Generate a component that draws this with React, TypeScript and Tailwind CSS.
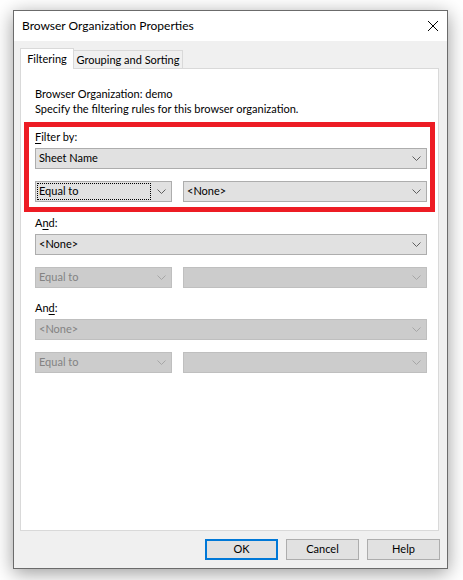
import React from "react";

function Chevron({ disabled }: { disabled?: boolean }) {
    return (
        <svg width="9" height="5" viewBox="0 0 9 5" className={disabled ? "text-[#a6a6a6]" : "text-[#5f5f5f]"}>
            <polyline points="0.5,0.5 4.5,4.5 8.5,0.5" fill="none" stroke="currentColor" strokeWidth="1" />
        </svg>
    );
}

function Select({ value, disabled, focused }: { value?: string; disabled?: boolean; focused?: boolean }) {
    return (
        <div
            className={
                disabled
                    ? "flex h-[21px] items-center border border-[#bfbfbf] bg-[#cccccc] text-[#838383]"
                    : "flex h-[21px] items-center border border-[#adadad] bg-[#e1e1e1] text-black"
            }
        >
            <div className="flex h-full flex-1 items-center p-[1px]">
                <span
                    className={
                        focused
                            ? "flex h-full w-full items-center border border-dotted border-black pl-[1px]"
                            : "flex h-full w-full items-center border border-transparent pl-[1px]"
                    }
                >
                    {value}
                </span>
            </div>
            <div className="flex w-[19px] justify-center">
                <Chevron disabled={disabled} />
            </div>
        </div>
    );
}

function FilterGroup({
    label,
    field,
    disabled,
    rowDisabled,
    focused,
    className,
}: {
    label: React.ReactNode;
    field: string;
    disabled?: boolean;
    rowDisabled?: boolean;
    focused?: boolean;
    className?: string;
}) {
    return (
        <div className={className}>
            {/* Label */}
            <div className="h-[15px] leading-[15px]">{label}</div>

            {/* Field */}
            <div className="mt-[4px]">
                <Select value={field} disabled={disabled} />
            </div>

            {/* Operator + value */}
            <div className="mt-[12px] grid grid-cols-[137px_1fr] gap-[11px]">
                <Select value="Equal to" disabled={rowDisabled} focused={focused} />
                <Select value={rowDisabled ? "" : "<None>"} disabled={rowDisabled} />
            </div>
        </div>
    );
}

function Button({ children, primary }: { children: React.ReactNode; primary?: boolean }) {
    return (
        <button
            className={
                primary
                    ? "flex h-[21px] w-[73px] items-center justify-center border-2 border-[#0078d7] bg-[#e1e1e1] text-black"
                    : "flex h-[21px] w-[73px] items-center justify-center border border-[#adadad] bg-[#e1e1e1] text-black"
            }
        >
            {children}
        </button>
    );
}

export default function App() {
    return (
        <div className="h-[580px] w-[463px] bg-white pl-[13px] pt-[10px] font-['Segoe_UI','Lato',sans-serif] text-[11px] text-black">
            <div className="flex h-[559px] w-[435px] flex-col border border-[#6b6b6b] shadow-[0_4px_18px_rgba(0,0,0,0.4)]">
                {/* Title bar */}
                <div className="flex h-[30px] items-center justify-between bg-white pl-[8px] pr-[9px]">
                    <span className="text-[12px]">Browser Organization Properties</span>
                    <svg width="10" height="10" viewBox="0 0 10 10">
                        <path d="M0 0 L10 10 M10 0 L0 10" stroke="#000" strokeWidth="1" />
                    </svg>
                </div>

                {/* Body */}
                <div className="flex flex-1 flex-col bg-[#f0f0f0]">
                    {/* Tabs */}
                    <div className="flex items-end pl-[6px] pt-[7px]">
                        <div className="relative z-10 -mb-px flex h-[21px] w-[54px] items-center justify-center whitespace-nowrap border border-b-0 border-[#d9d9d9] bg-white">
                            Filtering
                        </div>
                        <div className="flex h-[18px] w-[109px] items-center justify-center whitespace-nowrap border-r border-t border-[#d9d9d9] bg-[#f0f0f0] pt-[1px]">
                            Grouping and Sorting
                        </div>
                    </div>

                    {/* Panel */}
                    <div className="relative ml-[6px] mr-[8px] h-[463px] border border-[#d9d9d9] bg-white pl-[14px] pr-[11px] pt-[17px]">
                        <div className="leading-[15px]">
                            <p>Browser Organization: demo</p>
                            <p>Specify the filtering rules for this browser organization.</p>
                        </div>

                        <div className="mt-[13px] flex flex-col gap-[12px]">
                            <FilterGroup
                                className="pb-[1px]"
                                label={
                                    <>
                                        <u className="underline-offset-[2px]">F</u>ilter by:
                                    </>
                                }
                                field="Sheet Name"
                                focused
                            />
                            <FilterGroup
                                label={
                                    <>
                                        A<u className="underline-offset-[2px]">n</u>d:
                                    </>
                                }
                                field="<None>"
                                rowDisabled
                            />
                            <FilterGroup
                                label={
                                    <>
                                        An<u className="underline-offset-[2px]">d</u>:
                                    </>
                                }
                                field="<None>"
                                disabled
                                rowDisabled
                            />
                        </div>

                        {/* Highlight annotation */}
                        <div className="pointer-events-none absolute left-[3px] top-[53px] h-[90px] w-[411px] border-[5px] border-[#ed1c24]" />
                    </div>

                    {/* Buttons */}
                    <div className="mt-[8px] flex justify-end gap-[8px] pr-[7px]">
                        <Button primary>OK</Button>
                        <Button>Cancel</Button>
                        <Button>Help</Button>
                    </div>
                </div>
            </div>
        </div>
    );
}
